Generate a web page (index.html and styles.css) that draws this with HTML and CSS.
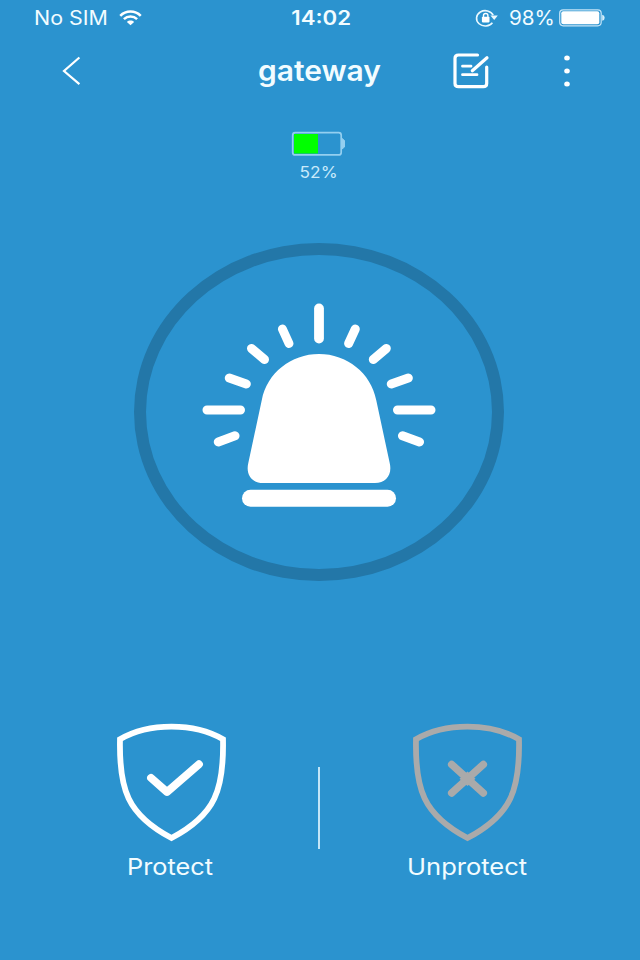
FILE: index.html
```html
<!DOCTYPE html>
<html lang="en">
    <head>
        <meta charset="utf-8">
        <title>gateway</title>
        <link rel="stylesheet" href="styles.css">
    </head>
    <body>
		<div class="statusBar">
			<div class="carrier">
				<span class="wide noSim">No SIM</span>
				<svg width="23" height="18" viewBox="0 0 24 18" fill="none" stroke="#fff" stroke-width="2.7">
					<path d="M1.3 6.7C7.2 .8 16.8 .8 22.7 6.7"/>
					<path d="M5.1 10.2C9 6.6 15 6.6 18.9 10.2"/>
					<path d="M8.2 13.2C10.3 11.2 13.7 11.2 15.8 13.2L12 16.5Z" fill="#fff" stroke="none"/>
				</svg>
			</div>
			<span class="wide clock">14:02</span>
			<div class="power">
				<svg width="24" height="20" viewBox="0 0 24 20">
					<path d="M17.4 14.7A8.7 7.7 0 1 1 18.2 7.2" fill="none" stroke="#e8f8ff" stroke-width="1.6"/>
					<path d="M15.4 7.6H22.8L19.2 11.9Z" fill="#e8f8ff"/>
					<rect x="6.9" y="8.8" width="7.6" height="5.6" rx=".8" fill="#fff"/>
					<path d="M8.5 9.2V7.6C8.5 4.8 12.900 4.8 12.900 7.600V9.2" fill="none" stroke="#fff" stroke-width="1.4"/>
				</svg>
				<span class="wide charge">98%</span>
				<svg width="46" height="18" viewBox="0 0 46 18">
					<rect x=".7" y=".8" width="41.500" height="16" rx="3.5" fill="none" stroke="#c5e5f8" stroke-width="1.2"/>
					<rect x="2.3" y="2.300" width="38" height="13" rx="2" fill="#fff"/>
					<path d="M43.200 5.8Q45.700 6.3 45.700 8.8T43.200 11.8Z" fill="#d5effc"/>
				</svg>
			</div>
		</div>
		<div class="navBar">
			<svg class="back" width="20" height="32" viewBox="0 0 20 32" fill="none" stroke="#fff" stroke-width="2.2">
				<path d="M18.4 2.500L3 16L18.4 29.200"/>
			</svg>
			<h1><span class="wide title">gateway</span></h1>
			<svg class="edit" width="40" height="40" viewBox="0 0 40 40" fill="none" stroke="#fff" stroke-width="3.200" stroke-linecap="round">
				<path d="M26.5 4H7.500Q4 4 4 7.200V32.5Q4 35.700 7.5 35.700H32.300Q35.700 35.700 35.700 32.5V16"/>
				<path d="M36 6.8L21.3 19.800"/>
				<path d="M11.5 15.2H20M11.5 23.700H26" stroke-width="2.8"/>
			</svg>
			<svg class="more" width="8" height="34" viewBox="0 0 8 34" fill="#fff">
				<ellipse cx="4" cy="4" rx="2.8" ry="2.5"/>
				<ellipse cx="4" cy="17" rx="2.8" ry="2.5"/>
				<ellipse cx="4" cy="30" rx="2.8" ry="2.5"/>
			</svg>
		</div>
		<div class="level">
			<svg width="56" height="26" viewBox="0 0 56 26">
				<rect x="1.7" y="1.700" width="48.5" height="22.2" rx="2.5" fill="none" stroke="#94cff0" stroke-width="1.7"/>
				<path d="M51 7.5L53.500 9.5V16L51 18Z" fill="#94cff0" stroke="#94cff0" stroke-width="1" stroke-linejoin="round"/>
				<rect x="3" y="3" width="24" height="19.5" fill="#0f0"/>
			</svg>
			<span class="wide percent">52%</span>
		</div>
		<div class="alarm">
			<svg width="240" height="210" viewBox="0 0 240 210" fill="#fff">
				<path d="M120 52C92 52 68 71 62.800 98L49.300 161C46.500 173 53 181 64 181H176C187 181 193.500 173 190.700 161L177.200 98C172 71 148 52 120 52Z"/>
				<rect x="43" y="187.800" width="154" height="17" rx="8.5"/>
				<g fill="none" stroke="#fff" stroke-width="9" stroke-linecap="round">
					<path d="M120 6.500V36.500" stroke-width="9.800"/>
					<path d="M83.400 27L90 41.500M156.300 27L149.600 41.500"/>
					<path d="M52.500 46.500L65.500 57.500M187.300 46.500L174.300 57.500"/>
					<path d="M30.300 76L47.300 82M209.300 76L192.300 82"/>
					<path d="M8 108H41.500M198.500 108H232"/>
					<path d="M19.300 140L36 133.800M220.500 140L203.500 133.800"/>
				</g>
			</svg>
		</div>
		<div class="actions">
			<div class="action">
				<svg width="112" height="122" viewBox="0 0 112 122" fill="none" stroke="#fff" stroke-width="5.800">
					<path d="M5 18.300C34 1.500 79 1.500 108 18.300C109 68 101 93.500 56.500 117C12 93.500 4 68 5 18.300Z"/>
					<path d="M36 56.800L52 71L84 43.200" stroke-width="7.800" stroke-linecap="round" stroke-linejoin="round"/>
				</svg>
				<span class="wide protect">Protect</span>
			</div>
			<div class="divider"></div>
			<div class="action">
				<svg width="112" height="122" viewBox="0 0 112 122" fill="none" stroke="#aaa" stroke-width="5.800">
					<path d="M4 18.300C33 1.500 78 1.500 107 18.300C108 68 100 93.500 55.500 117C11 93.500 3 68 4 18.300Z"/>
					<path d="M39.700 43.500L71.300 72M71.300 43.500L39.700 72" stroke-width="7.500" stroke-linecap="round"/>
					<path d="M55.500 50.500L63.500 57.700L55.500 65L47.500 57.700Z" fill="#aaa" stroke="none"/>
				</svg>
				<span class="wide unprotect">Unprotect</span>
			</div>
		</div>
    </body>
</html>
```
FILE: styles.css
```css
html{
	background-color: #2b93cf;
}
body{
	margin: 0;
	width: 640px;
	height: 960px;
	overflow: hidden;
	color: #f2fcff;
	font-family: Inter, "Liberation Sans", sans-serif;
}
svg{
	display: block;
	flex: none;
}
/*Labels are a little wider than the font draws them*/
.wide{
	display: inline-block;
	white-space: nowrap;
	transform: scaleX(1.11);
}
.statusBar{
	display: grid;
	grid-template-columns: 1fr auto 1fr;
	align-items: center;
	height: 35px;
	padding: 0 31px 0 34px;
	box-sizing: border-box;
	font-size: 19.5px;
}
.carrier, .power{
	display: flex;
	align-items: center;
}
.power{
	justify-content: flex-end;
	padding-right: 4px;
}
.noSim{
	width: 85px;
	transform: scaleX(1.1);
	transform-origin: left;
}
.clock{
	font-weight: 600;
	transform: scaleX(1.14);
}
.charge{
	width: 39px;
	margin: 0 11px 0 10px;
	transform: scaleX(1.06);
	transform-origin: left;
}
.navBar{
	display: grid;
	grid-template-columns: 182px 274px 40px 1fr;
	align-items: center;
	height: 72px;
}
.back{
	margin-left: 61px;
}
h1{
	margin: 0;
	text-align: center;
	font-size: 28px;
	font-weight: 600;
	line-height: 34px;
}
.title{
	transform: scaleX(1.07);
}
.edit{
	margin-left: -5px;
}
.more{
	margin-left: 67px;
}
.level{
	display: flex;
	flex-direction: column;
	align-items: center;
	height: 136px;
	padding-top: 24px;
	margin-right: 2px;
	box-sizing: border-box;
	color: #c9eafb;
	font-size: 16px;
	line-height: 31px;
}
.percent{
	transform: scaleX(1.08);
}
.alarm{
	display: flex;
	justify-content: center;
	width: 370px;
	height: 338px;
	margin: 0 auto 0 134px;
	padding-top: 47px;
	box-sizing: border-box;
	border: 12px solid #2377a8;
	border-radius: 50%;
}
.actions{
	display: flex;
	justify-content: center;
	padding-top: 140px;
	margin-right: 2px;
}
.action{
	display: flex;
	flex-direction: column;
	align-items: center;
	width: 295px;
	font-size: 23px;
	line-height: 49px;
}
.protect{
	transform: scaleX(1.1);
}
.divider{
	width: 2px;
	height: 82px;
	margin-top: 46px;
	background-color: #c3e5f7;
}
```
